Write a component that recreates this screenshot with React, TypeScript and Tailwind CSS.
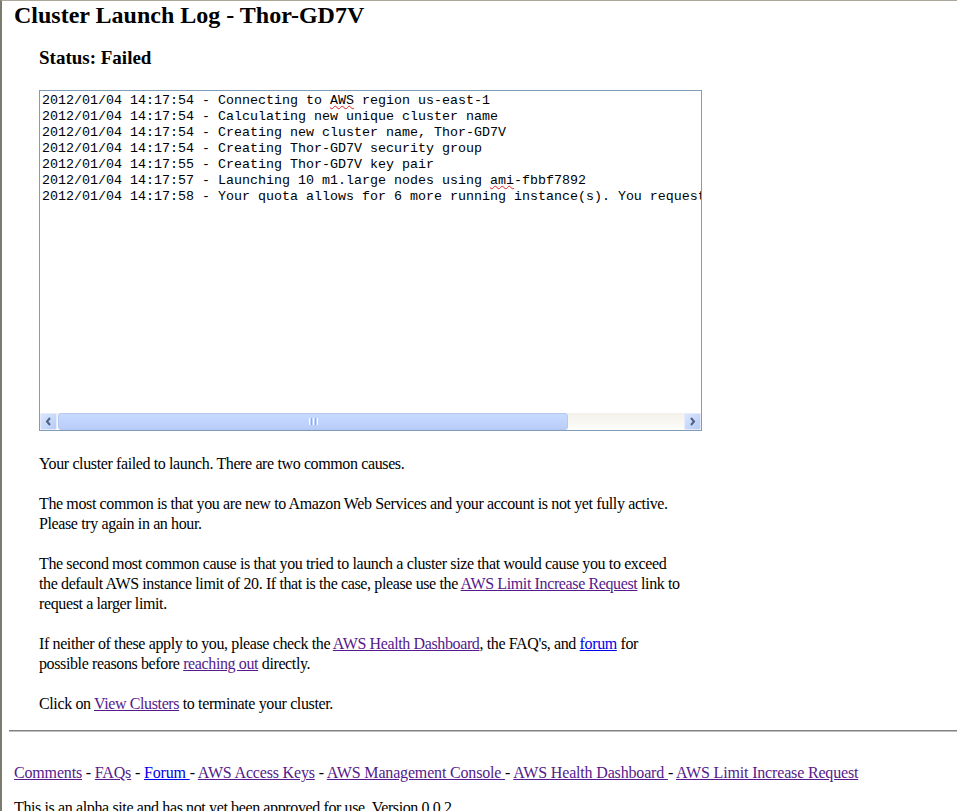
const serif = "font-['Liberation_Serif','Times_New_Roman',serif]";

const logLines: { time: string; msg: React.ReactNode }[] = [
  { time: "2012/01/04 14:17:54", msg: <>Connecting to <Typo>AWS</Typo> region us-east-1</> },
  { time: "2012/01/04 14:17:54", msg: "Calculating new unique cluster name" },
  { time: "2012/01/04 14:17:54", msg: "Creating new cluster name, Thor-GD7V" },
  { time: "2012/01/04 14:17:54", msg: "Creating Thor-GD7V security group" },
  { time: "2012/01/04 14:17:55", msg: "Creating Thor-GD7V key pair" },
  { time: "2012/01/04 14:17:57", msg: <>Launching 10 m1.large nodes using <Typo>ami</Typo>-fbbf7892</> },
  { time: "2012/01/04 14:17:58", msg: "Your quota allows for 6 more running instance(s). You requested 10 nodes, please request a larger limit." },
];

function Typo({ children }: { children: React.ReactNode }) {
  return <span className="underline decoration-wavy decoration-[#e02020] decoration-1 underline-offset-[1px]">{children}</span>;
}

function Visited({ children }: { children: React.ReactNode }) {
  return <a href="#" className="text-[#551a8b] underline">{children}</a>;
}

function Fresh({ children }: { children: React.ReactNode }) {
  return <a href="#" className="text-[#0000ee] underline">{children}</a>;
}

function Arrow({ dir }: { dir: "left" | "right" }) {
  return (
    <div className="flex h-[17px] w-[17px] shrink-0 items-center justify-center rounded-[2px] border border-[#e4ebfb] bg-[linear-gradient(135deg,#dbe6fd,#b7cbf7)]">
      <svg width="7" height="9" viewBox="0 0 7 9">
        <path d={dir === "left" ? "M5 1 L2 4.5 L5 8" : "M2 1 L5 4.5 L2 8"} fill="none" stroke="#4d6185" strokeWidth="2" />
      </svg>
    </div>
  );
}

function Scrollbar() {
  return (
    <div className="flex h-[17px] items-center bg-[linear-gradient(#f3f1ea,#fdfdfa)]">
      <Arrow dir="left" />
      <div className="ml-[1px] flex h-[17px] w-[510px] items-center justify-center rounded-[3px] border border-[#b4c8f4] bg-[linear-gradient(#c9daff,#b8cdf8)]">
        <div className="flex gap-[1px]">
          <span className="h-[7px] w-[1px] bg-white" />
          <span className="h-[7px] w-[1px] bg-[#8caaf0]" />
          <span className="h-[7px] w-[1px] bg-white" />
          <span className="h-[7px] w-[1px] bg-[#8caaf0]" />
          <span className="h-[7px] w-[1px] bg-white" />
        </div>
      </div>
      <div className="flex-1" />
      <Arrow dir="right" />
    </div>
  );
}

export default function App() {
  return (
    <div className={`${serif} h-[811px] overflow-hidden border-l-2 border-t border-l-[#7b7b6e] border-t-[#aca899] bg-white text-black`}>
      <h1 className="ml-[12px] text-[24px] font-bold leading-[28px]">Cluster Launch Log - Thor-GD7V</h1>

      <div className="ml-[37px] w-[663px]">
        <h3 className="mt-[18px] text-[19px] font-bold leading-[22px]">Status: Failed</h3>

        <div className="mt-[21px] flex h-[341px] flex-col border border-[#7f9db9]">
          <div className="flex-1 overflow-hidden whitespace-pre pl-[2px] pt-[2px] font-['Liberation_Mono','Courier_New',monospace] text-[13.33px] leading-[16px]">
            {logLines.map((l, i) => (
              <div key={i}>{l.time} - {l.msg}</div>
            ))}
          </div>
          <Scrollbar />
        </div>

        <div className="mt-[23px] whitespace-nowrap text-[16px] leading-[20px] tracking-[-0.38px]">
          <p>Your cluster failed to launch. There are two common causes.</p>
          <p className="mt-[20px]">
            The most common is that you are new to Amazon Web Services and your account is not yet fully active.<br />
            Please try again in an hour.
          </p>
          <p className="mt-[20px]">
            The second most common cause is that you tried to launch a cluster size that would cause you to exceed<br />
            the default AWS instance limit of 20. If that is the case, please use the <Visited>AWS Limit Increase Request</Visited> link to<br />
            request a larger limit.
          </p>
          <p className="mt-[20px]">
            If neither of these apply to you, please check the <Visited>AWS Health Dashboard</Visited>, the FAQ's, and <Fresh>forum</Fresh> for<br />
            possible reasons before <Visited>reaching out</Visited> directly.
          </p>
          <p className="mt-[20px]">
            Click on <Visited>View Clusters</Visited> to terminate your cluster.
          </p>
        </div>
      </div>

      <hr className="ml-[7px] mt-[16px] border-0 border-t border-b border-t-[#808080] border-b-[#c0c0c0]" />

      <div className="ml-[12px] mt-[31px] whitespace-nowrap text-[16px] leading-[20px] tracking-[-0.17px]">
        <Visited>Comments</Visited> - <Visited>FAQs</Visited> - <Fresh>Forum </Fresh>- <Visited>AWS Access Keys</Visited> - <Visited>AWS Management Console </Visited>- <Visited>AWS Health Dashboard </Visited>- <Visited>AWS Limit Increase Request</Visited>
      </div>

      <p className="ml-[12px] mt-[15px] whitespace-nowrap text-[16px] leading-[20px] tracking-[-0.38px]">
        This is an alpha site and has not yet been approved for use. Version 0.0.2
      </p>
    </div>
  );
}
